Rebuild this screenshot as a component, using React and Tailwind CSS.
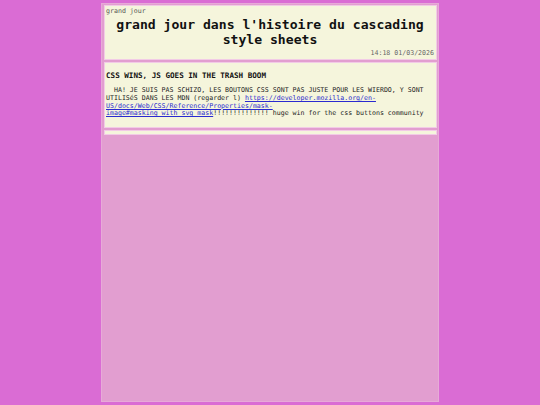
export default function App() {
  const mono = { fontFamily: '"DejaVu Sans Mono", "Liberation Mono", monospace' };
  return (
    <div className="min-h-[405px] w-full bg-[#da6cd4] pt-[3px]" style={mono}>
      <div className="mx-auto flex h-[399px] w-[338px] flex-col gap-[2px] border border-[#e7aad8] bg-[#e29ed0] px-[1.5px] pt-[1px]">
        <div className="border border-[#f2cbe6] bg-[#f5f5dc] px-[1.5px] pt-[1px] pb-[2px]">
          <div className="text-[6.6px] leading-[8px] text-[#555]">grand jour</div>
          <h1 className="mt-[2px] text-center text-[13.1px] font-bold leading-[15.3px] text-[#111]">
            grand jour dans l'histoire du cascading style sheets
          </h1>
          <div className="mt-[1px] text-right text-[6.6px] leading-[8px] text-[#666]">14:18 01/03/2026</div>
        </div>
        <div className="border border-[#f2cbe6] bg-[#f5f5dc] px-[1.5px] pt-[8.5px] pb-[9px]">
          <h3 className="text-[7.6px] font-bold leading-[9px] text-[#111]">CSS WINS, JS GOES IN THE TRASH BOOM</h3>
          <p className="mt-[7.3px] w-[324px] text-[6.6px] leading-[7.67px] text-[#222]">
            {"\u00a0\u00a0HA! JE SUIS PAS SCHIZO, LES BOUTONS CSS SONT PAS JUSTE POUR LES WIERDO, Y SONT UTILISéS DANS LES MDN (regarder l) "}
            <a
              href="#"
              className="text-[#2a2ad0] underline"
            >
              https://developer.mozilla.org/en-US/docs/Web/CSS/Reference/Properties/mask-image#masking_with_svg_mask
            </a>
            {"!!!!!!!!!!!!!! huge win for the css buttons community"}
          </p>
        </div>
        <div className="h-[5px] border border-[#f2cbe6] bg-[#f5f5dc]"></div>
      </div>
    </div>
  );
}
